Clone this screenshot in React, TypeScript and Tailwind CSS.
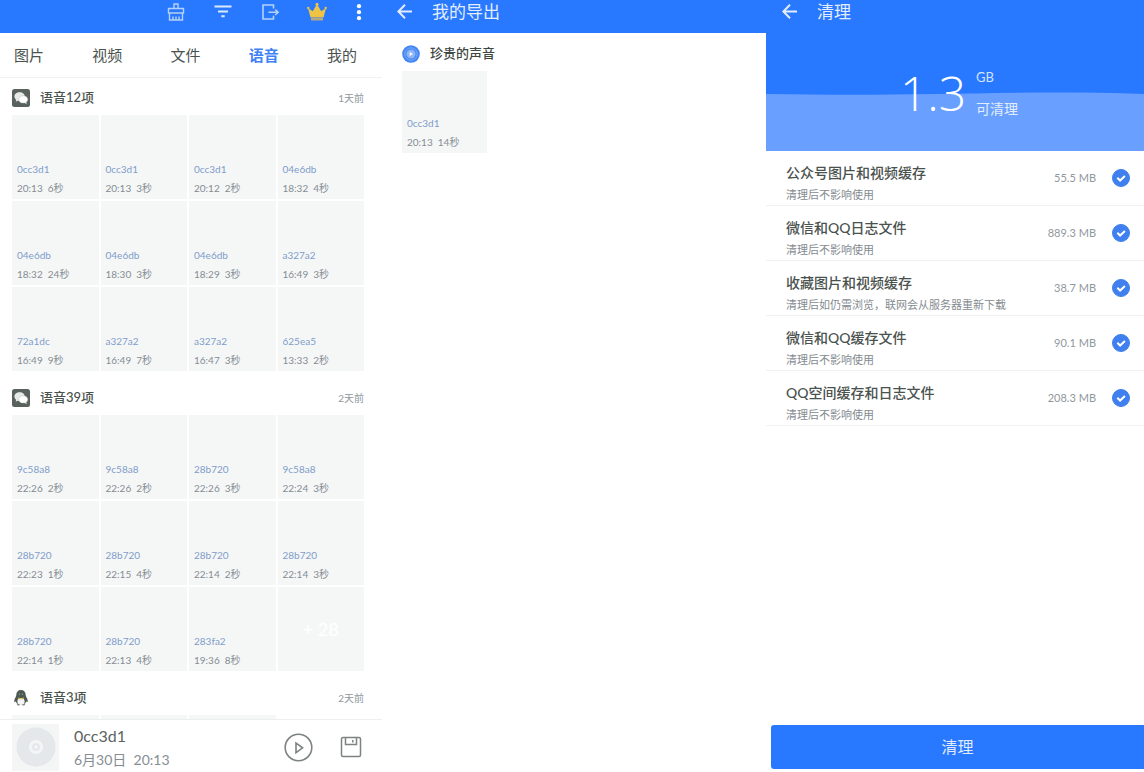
import type { ReactNode } from "react";

type Clip = { name: string; time: string };

const today: Clip[] = [
  { name: "0cc3d1", time: "20:13  6秒" },
  { name: "0cc3d1", time: "20:13  3秒" },
  { name: "0cc3d1", time: "20:12  2秒" },
  { name: "04e6db", time: "18:32  4秒" },
  { name: "04e6db", time: "18:32  24秒" },
  { name: "04e6db", time: "18:30  3秒" },
  { name: "04e6db", time: "18:29  3秒" },
  { name: "a327a2", time: "16:49  3秒" },
  { name: "72a1dc", time: "16:49  9秒" },
  { name: "a327a2", time: "16:49  7秒" },
  { name: "a327a2", time: "16:47  3秒" },
  { name: "625ea5", time: "13:33  2秒" },
];

const yesterday: Clip[] = [
  { name: "9c58a8", time: "22:26  2秒" },
  { name: "9c58a8", time: "22:26  2秒" },
  { name: "28b720", time: "22:26  3秒" },
  { name: "9c58a8", time: "22:24  3秒" },
  { name: "28b720", time: "22:23  1秒" },
  { name: "28b720", time: "22:15  4秒" },
  { name: "28b720", time: "22:14  2秒" },
  { name: "28b720", time: "22:14  3秒" },
  { name: "28b720", time: "22:14  1秒" },
  { name: "28b720", time: "22:13  4秒" },
  { name: "283fa2", time: "19:36  8秒" },
];

const junk = [
  { title: "公众号图片和视频缓存", note: "清理后不影响使用", size: "55.5 MB" },
  { title: "微信和QQ日志文件", note: "清理后不影响使用", size: "889.3 MB" },
  { title: "收藏图片和视频缓存", note: "清理后如仍需浏览，联网会从服务器重新下载", size: "38.7 MB" },
  { title: "微信和QQ缓存文件", note: "清理后不影响使用", size: "90.1 MB" },
  { title: "QQ空间缓存和日志文件", note: "清理后不影响使用", size: "208.3 MB" },
];

const tabs = ["图片", "视频", "文件", "语音", "我的"];

function WechatIcon() {
  return (
    <svg viewBox="0 0 18 18" className="size-[18px]">
      <rect width="18" height="18" rx="2.5" fill="#59625d" />
      <path d="M7.6 3.2C4.6 3.2 2.4 5 2.4 7.5c0 1.4.7 2.500 1.800 3.300l-.5 1.900 2.100-1c.6.1 1.200.2 1.800.2 3 0 5.200-1.900 5.200-4.400S10.600 3.200 7.600 3.200z" fill="#e6eae8" />
      <path d="M11.3 6.700c-2.600 0-4.600 1.600-4.600 3.700s2 3.700 4.600 3.700c.5 0 1-.1 1.500-.2l1.900 1-.5-1.600c1-.7 1.600-1.700 1.600-2.900 0-2.100-2-3.700-4.500-3.700z" fill="#fff" stroke="#a9b0ac" strokeWidth=".4" />
    </svg>
  );
}

function PenguinIcon() {
  return (
    <svg viewBox="0 0 18 18" className="size-[18px]">
      <path d="M9 1C6 1 4.300 3.100 4.300 5.800c0 .8-.1 1.300-.6 2.100C2.700 9.500 2.100 11 2.300 12.600c.1 1 .8.700 1.500-.3.200 1 .6 1.800 1.300 2.500h7.800c.7-.7 1.100-1.500 1.300-2.500.7 1 1.400 1.300 1.500.3.200-1.600-.4-3.100-1.400-4.700-.5-.8-.6-1.300-.6-2.100C13.700 3.100 12 1 9 1z" fill="#4f5a54" />
      <ellipse cx="9" cy="12.600" rx="3.600" ry="3.700" fill="#f3f4f4" />
      <circle cx="7.500" cy="5.200" r=".6" fill="#9aa39e" />
      <circle cx="10.500" cy="5.200" r=".6" fill="#9aa39e" />
      <path d="M6 8.600c1.900.9 4.100.9 6 0l-.4 1.200c-1.700.7-3.500.7-5.200 0z" fill="#e3c04f" />
      <path d="M4.800 15.200c1.200-.6 2.400-.3 3.600.6-1 1.100-3.300 1-3.600-.6zM13.200 15.200c-1.200-.6-2.400-.3-3.600.6 1 1.100 3.300 1 3.600-.6z" fill="#7f8379" />
    </svg>
  );
}

function DiscIcon() {
  return (
    <svg viewBox="0 0 18 18" className="size-[18px]">
      <circle cx="9" cy="9" r="8.800" fill="#4285f4" />
      <circle cx="9" cy="9" r="6.200" fill="none" stroke="#7fadf8" strokeWidth="1" />
      <circle cx="9" cy="9" r="4.600" fill="#8db5f6" />
      <path d="M7.700 7l3.300 2-3.300 2z" fill="#fff" />
    </svg>
  );
}

function BackBar({ title, className }: { title: string; className: string }) {
  return (
    <header className={`flex h-[33px] items-center bg-[#2879ff] pb-[10px] text-[#e4edfd] ${className}`}>
      <button aria-label="返回" className="mr-5 size-[15px]">
        <svg viewBox="0 0 15 15" fill="none" stroke="currentColor" strokeWidth="2" className="size-full">
          <path d="M15 7.500H1.500M8 .8L1.300 7.500l6.700 6.700" />
        </svg>
      </button>
      <h1 className="text-[17px] leading-5">{title}</h1>
    </header>
  );
}

function Tile({ clip, className = "" }: { clip?: Clip; className?: string }) {
  return (
    <div className={`flex flex-col justify-end bg-[#f5f7f7] pb-px pl-[5px] text-[10px] leading-[19px] ${className}`}>
      {clip && (
        <>
          <span className="text-[#7f9cc9]">{clip.name}</span>
          <span className="whitespace-pre text-[#848c93]">{clip.time}</span>
        </>
      )}
    </div>
  );
}

function Group({ icon, title, when, children }: { icon: ReactNode; title: string; when: string; children: ReactNode }) {
  return (
    <section className="mb-[10px]">
      <div className="flex h-[34px] items-center">
        {icon}
        <h2 className="ml-[10px] flex-1 text-[13px] font-medium text-[#4a524e]">{title}</h2>
        <span className="text-[10px] text-[#90979d]">{when}</span>
      </div>
      <div className="grid auto-rows-[84px] grid-cols-4 gap-[2px]">{children}</div>
    </section>
  );
}

function VoicePanel() {
  return (
    <div className="flex min-h-0 flex-col">
      <header className="flex h-[33px] shrink-0 items-center justify-end gap-[27px] bg-[#2879ff] pr-[18px] pb-[10px] text-[#b5d1fb]">
        <button aria-label="清理" className="size-5">
          <svg viewBox="0 0 20 20" fill="none" stroke="currentColor" strokeWidth="1.400" className="size-full">
            <path d="M8 6.500V2h4v4.500M2.500 11V6.500h15V11zM3.500 11v7h13v-7M7 18v-3.500M10 18v-3.500M13 18v-3.500" />
          </svg>
        </button>
        <button aria-label="筛选" className="size-5 text-[#dce9fd]">
          <svg viewBox="0 0 20 20" fill="none" stroke="currentColor" strokeWidth="2" className="size-full">
            <path d="M1.500 4.500h17M5 9.500h10M8.300 14.200h3.400" />
          </svg>
        </button>
        <button aria-label="导出" className="size-5">
          <svg viewBox="0 0 20 20" fill="none" stroke="currentColor" strokeWidth="1.600" className="size-full">
            <path d="M13.500 6.500V3H3v14h10.500v-3.200M8.500 10.300h9.500M15.300 7.600l2.800 2.700-2.800 2.700" />
          </svg>
        </button>
        <button aria-label="会员" className="size-5">
          <svg viewBox="0 0 20 20" className="size-full">
            <path d="M3.500 15.500L1 6l4.800 3.200L10 2l4.200 7.200L19 6l-2.500 9.500z" fill="#efc344" />
            <circle cx="10" cy="2.300" r="1.500" fill="#efc344" />
            <circle cx="1.300" cy="6" r="1.200" fill="#efc344" />
            <circle cx="18.700" cy="6" r="1.200" fill="#efc344" />
            <path d="M4 16h12v2.500H4z" fill="#b3a880" />
          </svg>
        </button>
        <button aria-label="更多" className="h-5 w-[10px] text-white">
          <svg viewBox="0 0 10 20" fill="currentColor" className="size-full">
            <circle cx="5" cy="4.200" r="2.100" />
            <circle cx="5" cy="10.200" r="2.100" />
            <circle cx="5" cy="16.200" r="2.100" />
          </svg>
        </button>
      </header>

      <nav className="flex h-[45px] shrink-0 items-center justify-between border-b border-[#f0f1f2] pr-[25px] pl-[14px] text-[15px] text-[#4a524e]">
        {tabs.map((tab) => (
          <button key={tab} className={tab === "语音" ? "font-bold text-[#3f82f5]" : ""}>
            {tab}
          </button>
        ))}
      </nav>

      <main className="min-h-0 flex-1 overflow-hidden pt-[3px] pr-[18px] pl-3">
        <Group icon={<WechatIcon />} title="语音12项" when="1天前">
          {today.map((clip, i) => (
            <Tile key={i} clip={clip} />
          ))}
        </Group>
        <Group icon={<WechatIcon />} title="语音39项" when="2天前">
          {yesterday.map((clip, i) => (
            <Tile key={i} clip={clip} />
          ))}
          <button className="bg-[#f5f7f7] text-lg text-white">+ 28</button>
        </Group>
        <Group icon={<PenguinIcon />} title="语音3项" when="2天前">
          <Tile />
          <Tile />
          <Tile />
        </Group>
      </main>

      <footer className="flex h-[53px] shrink-0 items-center border-t border-[#eceeef] pt-[2px] pr-5 pl-3 text-[#7c8380]">
        <div className="flex size-[47px] items-center justify-center bg-[#f4f6f6]">
          <svg viewBox="0 0 40 40" fill="none" className="size-10">
            <circle cx="20" cy="20" r="19.500" fill="#e4e8eb" />
            <circle cx="20" cy="20" r="7" fill="#f4f6f6" />
            <circle cx="20" cy="20" r="4" fill="#e4e8eb" />
            <path d="M18.800 17.800l3.200 2.200-3.200 2.200z" fill="#f7f8f8" />
          </svg>
        </div>
        <div className="ml-[15px] flex-1 pt-[2px]">
          <p className="text-base leading-6 text-[#5c6460]">0cc3d1</p>
          <p className="whitespace-pre text-sm leading-6 text-[#868d92]">6月30日  20:13</p>
        </div>
        <button aria-label="播放" className="mr-[27px] size-[29px]">
          <svg viewBox="0 0 29 29" fill="none" stroke="currentColor" strokeWidth="1.600" className="size-full">
            <circle cx="14.500" cy="14.500" r="13.300" />
            <path d="M12 10v9.600l6.600-4.800z" />
          </svg>
        </button>
        <button aria-label="保存" className="size-[22px]">
          <svg viewBox="0 0 22 22" fill="none" stroke="currentColor" strokeWidth="1.500" className="size-full">
            <rect x="1.500" y="1.500" width="19" height="19" rx="1.500" />
            <path d="M5.500 1.500v7h11v-7M12.800 4v2.500" />
          </svg>
        </button>
      </footer>
    </div>
  );
}

function ExportPanel() {
  return (
    <div>
      <BackBar title="我的导出" className="pl-[15px]" />
      <section className="pt-1 pl-5">
        <div className="flex h-[34px] items-center">
          <DiscIcon />
          <h2 className="ml-[10px] text-[13px] font-medium text-[#3f4743]">珍贵的声音</h2>
        </div>
        <Tile clip={{ name: "0cc3d1", time: "20:13  14秒" }} className="h-[82px] w-[85px]" />
      </section>
    </div>
  );
}

function CleanPanel() {
  return (
    <div className="flex min-h-0 flex-col">
      <BackBar title="清理" className="shrink-0 pl-4" />
      <div className="relative flex h-[118px] shrink-0 items-center justify-center bg-[#2879ff] pt-[2px] pl-2 text-white">
        <svg viewBox="0 0 378 60" preserveAspectRatio="none" className="absolute inset-x-0 bottom-0 h-[60px] w-full">
          <path d="M0 3C60 4 110 4 170 3S300 0 378 3V60H0z" fill="#69a0ff" />
        </svg>
        <span className="relative font-['Open_Sans',sans-serif] text-5xl font-[350]">1.3</span>
        <div className="relative ml-[10px] text-[13px] leading-8 text-[#d3e3fd]">
          <p>GB</p>
          <p className="text-sm leading-8 text-[#e4edfb]">可清理</p>
        </div>
      </div>

      <ul className="flex-1">
        {junk.map((item) => (
          <li key={item.title} className="border-b border-[#eff1f2]">
            <label className="flex h-[54px] items-center pr-[14px] pl-5">
              <span className="flex-1 pt-[10px]">
                <span className="block text-sm leading-6 font-medium text-[#4a524e]">{item.title}</span>
                <span className="block text-[11px] leading-5 text-[#848b90]">{item.note}</span>
              </span>
              <span className="mr-4 text-[11px] text-[#90979d]">{item.size}</span>
              <span className="relative size-[18px]">
                <input
                  type="checkbox"
                  defaultChecked
                  className="peer block size-[18px] appearance-none rounded-full border border-[#c5cbd0] checked:border-[#3f80ee] checked:bg-[#3f80ee]"
                />
                <svg
                  viewBox="0 0 18 18"
                  fill="none"
                  stroke="#fff"
                  strokeWidth="2"
                  className="pointer-events-none absolute inset-0 hidden size-[18px] peer-checked:block"
                >
                  <path d="M5.300 8.800l2.800 2.700 4.800-4.500" />
                </svg>
              </span>
            </label>
          </li>
        ))}
      </ul>

      <div className="pb-[3px] pl-[5px]">
        <button className="h-11 w-full rounded-l-[3px] bg-[#2879ff] text-base text-[#e0ebfd]">清理</button>
      </div>
    </div>
  );
}

export default function App() {
  return (
    <div
      lang="zh-CN"
      className="grid h-screen grid-cols-[382fr_384fr_378fr] grid-rows-[minmax(0,1fr)] overflow-hidden bg-white font-['Lato','Noto_Sans_CJK_SC',sans-serif]"
    >
      <VoicePanel />
      <ExportPanel />
      <CleanPanel />
    </div>
  );
}
